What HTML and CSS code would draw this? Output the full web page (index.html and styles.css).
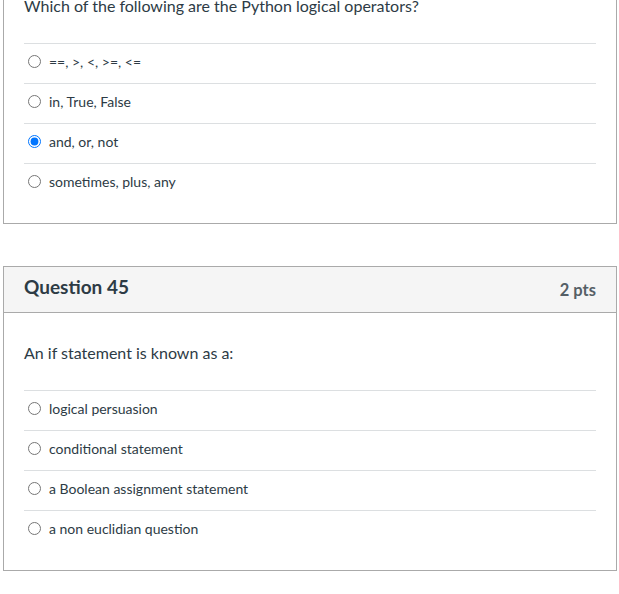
FILE: index.html
```html
<!DOCTYPE html>
<html>
<head>
<meta charset="utf-8">
<link rel="stylesheet" href="styles.css">
</head>
<body>
<div class="page">
  <div class="card first">
    <div class="card-header">
      <h2 class="q-title">Question 44</h2>
      <span class="pts">2 pts</span>
    </div>
    <div class="card-body">
      <p class="q-text">Which of the following are the Python logical operators?</p>
      <div class="answers">
        <label class="answer"><input type="radio" name="q44"><span>==, &gt;, &lt;, &gt;=, &lt;=</span></label>
        <label class="answer"><input type="radio" name="q44"><span>in, True, False</span></label>
        <label class="answer"><input type="radio" name="q44" checked><span>and, or, not</span></label>
        <label class="answer"><input type="radio" name="q44"><span>sometimes, plus, any</span></label>
      </div>
    </div>
  </div>
  <div class="card">
    <div class="card-header">
      <h2 class="q-title">Question 45</h2>
      <span class="pts">2 pts</span>
    </div>
    <div class="card-body">
      <p class="q-text">An if statement is known as a:</p>
      <div class="answers">
        <label class="answer"><input type="radio" name="q45"><span>logical persuasion</span></label>
        <label class="answer"><input type="radio" name="q45"><span>conditional statement</span></label>
        <label class="answer"><input type="radio" name="q45"><span>a Boolean assignment statement</span></label>
        <label class="answer"><input type="radio" name="q45"><span>a non euclidian question</span></label>
      </div>
    </div>
  </div>
</div>
</body>
</html>
```

FILE: styles.css
```css
* { box-sizing: border-box; }
html, body { margin: 0; padding: 0; background: #fff; overflow: hidden; }
body {
  font-family: Lato, "Noto Sans", sans-serif;
  color: #2d3b45;
}
.page {
  padding: 0 2px 0 3px;
  display: flex;
  flex-direction: column;
  gap: 42px;
}
.card {
  border: 1px solid #aaaaaa;
  width: 614px;
}
.card.first { margin-top: -81px; }
.card-header {
  height: 46px;
  background: #f5f5f5;
  border-bottom: 1px solid #aaaaaa;
  display: flex;
  align-items: center;
  justify-content: space-between;
  padding: 0 20px 0 20px;
}
.q-title {
  margin: 0;
  font-size: 19px;
  font-weight: 700;
  line-height: 22px;
  margin-top: -5px;
}
.pts {
  font-size: 16.5px;
  font-weight: 700;
  color: #555f66;
  line-height: 20px;
}
.card-body {
  padding: 29px 20px 20px 20px;
}
.q-text {
  margin: 0 0 26px 0;
  font-size: 16px;
  line-height: 22px;
}
.answers {
  display: flex;
  flex-direction: column;
}
.answer {
  display: flex;
  align-items: center;
  height: 40px;
  border-top: 1px solid #dcdfe1;
  font-size: 14px;
  padding-left: 3px;
  padding-bottom: 5px;
}
.answer input {
  margin: 0 8px 0 1px;
  width: 13px;
  height: 13px;
  accent-color: #0075ff;
}
```
